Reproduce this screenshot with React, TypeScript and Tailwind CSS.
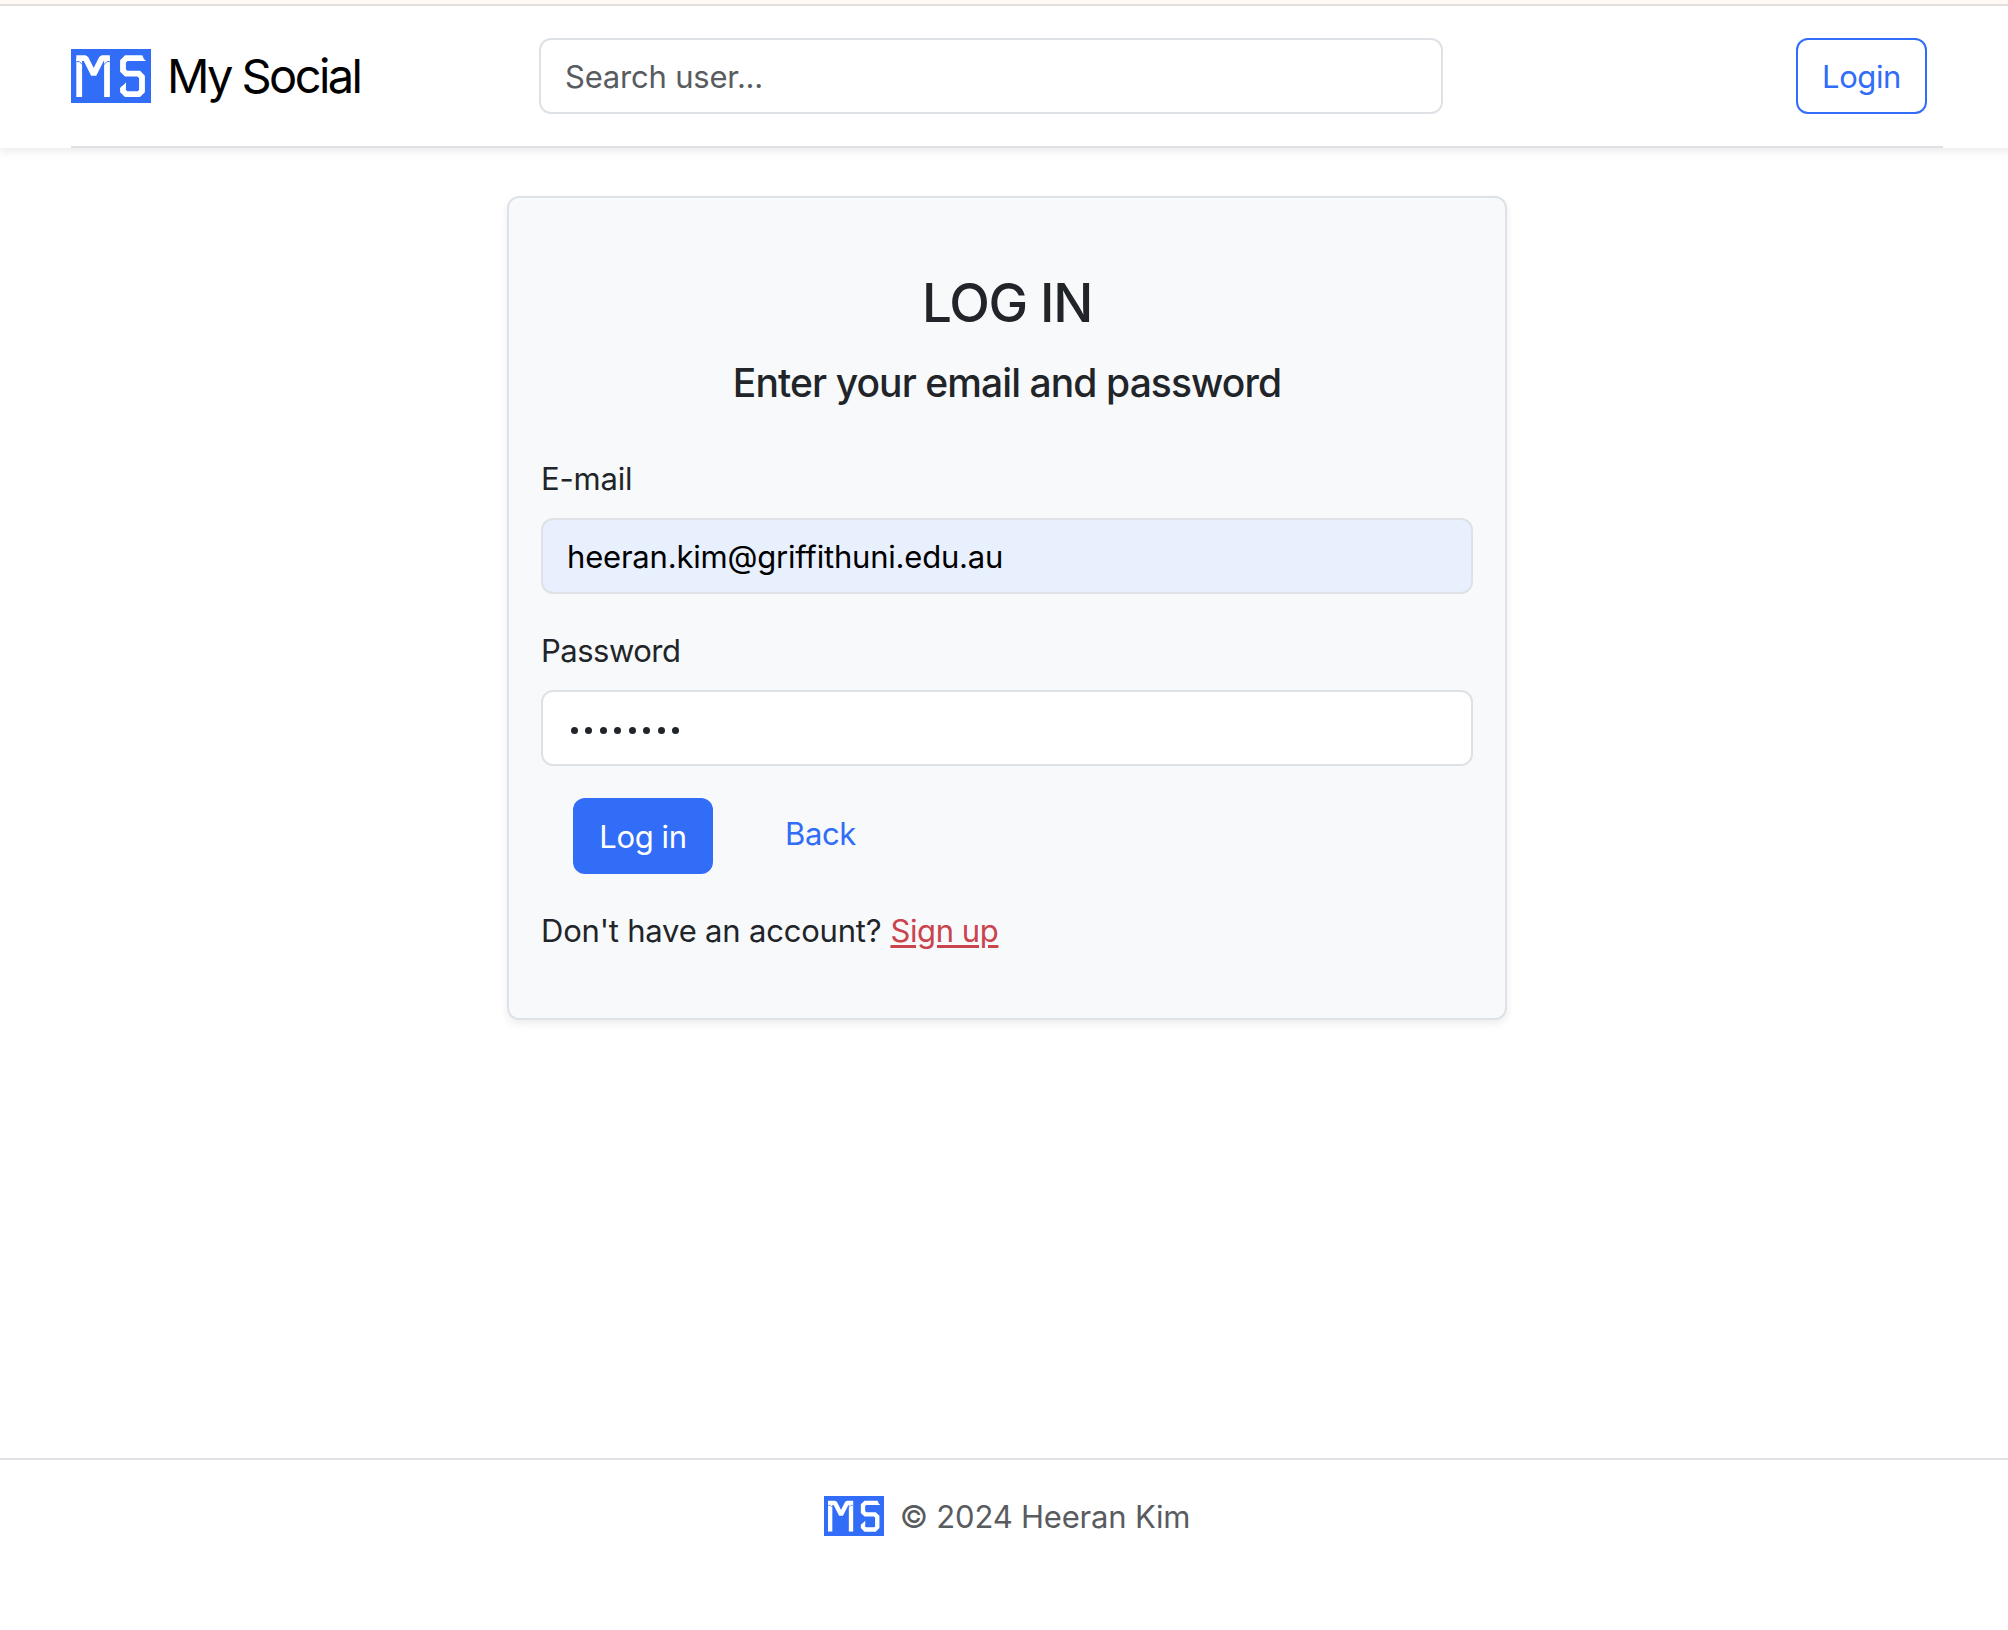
function Logo({ className }: { className: string }) {
  return (
    <svg viewBox="0 0 80 54" preserveAspectRatio="none" className={className} aria-label="MS">
      <rect width="80" height="54" fill="#316df6" />
      <g fill="none" stroke="#fff" strokeWidth="5.8">
        <path d="M8.2 48V9.2" />
        <path d="M36 48V9.2" />
        <path d="M5.3 9.2H14.6L22.7 25.4 30.8 9.2H38.9" strokeLinejoin="bevel" />
        <path d="M72.5 9.2H55.2L52 12.4V21.6L55.2 24.7H67.8L71 28V42L67.8 45.2H55.2L52 42V36.5" />
      </g>
      <path d="M70.7 6.2H76V12.2Z" fill="#316df6" />
      <path d="M71 8.5 75.2 12.1H71Z" fill="#fff" />
      <path d="M49 39.2 55 33.2V37.5L50 41Z" fill="#fff" />
      <path d="M48.5 33H55L48.5 39.4Z" fill="#316df6" />
      <path d="M5.4 12.6H8.4L11.8 16M38.9 12.6H36L32.6 16" stroke="#316df6" strokeWidth=".9" fill="none" />
    </svg>
  );
}

export default function App() {
  return (
    <div className="h-[1630px] w-full overflow-hidden bg-white font-['Inter',sans-serif] text-[31px] leading-[48px] tracking-[-0.2px] text-[#212529] [&_span]:relative [&_span]:top-px">
      <div className="flex h-full w-[2014px] flex-col">
        <div className="h-[6px] shrink-0 border-b-2 border-[#e5e0df] bg-[#fff8f5]" />
        <header className="h-[142px] shrink-0 px-[71px] shadow-[0_4px_8px_rgba(0,0,0,0.075)]">
          <div className="flex h-full items-start border-b-2 border-[#dee2e6] pt-8 pr-4">
            <a className="flex h-[76px] w-[468px] items-center text-black">
              <Logo className="h-[54px] w-[80px]" />
              <b className="ml-4 text-[47px] font-normal tracking-[-2.6px] whitespace-nowrap">My Social</b>
            </a>
            <div className="flex h-[76px] w-[904px] items-center rounded-xl border-2 border-[#dee2e6] pl-6 text-[#595c5f]">
              <span>Search user...</span>
            </div>
            <button className="ml-auto h-[76px] w-[131px] rounded-xl border-2 border-[#316df6] text-[#316df6]">
              <span className="tracking-[-0.4px]">Login</span>
            </button>
          </div>
        </header>

        <main className="mt-12 h-[824px] w-[1000px] shrink-0 self-center rounded-xl border-2 border-[#dee2e6] bg-[#f8f9fb] px-8 pt-[72px] shadow-[0_4px_8px_rgba(0,0,0,0.075)]">
          <h1 className="text-center text-[53px] leading-[67px] font-medium tracking-[-1.2px]">LOG IN</h1>
          <h2 className="mt-[22px] text-center text-[39px] leading-[48px] font-medium tracking-[-0.91px]">Enter your email and password</h2>
          <label className="mt-[47px] block h-12"><span>E-mail</span></label>
          <div className="mt-4 flex h-[76px] items-center rounded-xl border-2 border-[#dee2e6] bg-[#e8effd] pl-6 text-black">
            <span>heeran.kim@griffithuni.edu.au</span>
          </div>
          <label className="mt-8 block h-12"><span className="tracking-[-0.5px]">Password</span></label>
          <div className="mt-4 flex h-[76px] items-center gap-[7.45px] rounded-xl border-2 border-[#dee2e6] bg-white pt-[5px] pl-[28px]">
            {Array.from({ length: 8 }, (_, i) => (
              <i key={i} className="size-[7px] rounded-full bg-[#212529]" />
            ))}
          </div>
          <div className="mt-8 flex h-[76px] items-start pl-8">
            <button className="h-[76px] w-[140px] rounded-xl bg-[#316df6] text-white">
              <span className="tracking-[-0.4px]">Log in</span>
            </button>
            <a className="mt-[11px] ml-[72px] text-[#316df6]"><span className="tracking-[-0.4px]">Back</span></a>
          </div>
          <p className="mt-8 flex gap-[9px] whitespace-nowrap">
            <span>Don't have an account?</span>
            <span className="tracking-[-0.4px] text-[#c9444d] underline decoration-[3px] underline-offset-[3px]">Sign up</span>
          </p>
        </main>

        <footer className="mt-auto flex h-[172px] shrink-0 justify-center border-t-2 border-[#dee2e6] pt-8">
          <Logo className="mt-1 h-[40px] w-[60px]" />
          <span className="ml-4 text-[#595c5f]">© 2024 Heeran Kim</span>
        </footer>
      </div>
    </div>
  );
}
